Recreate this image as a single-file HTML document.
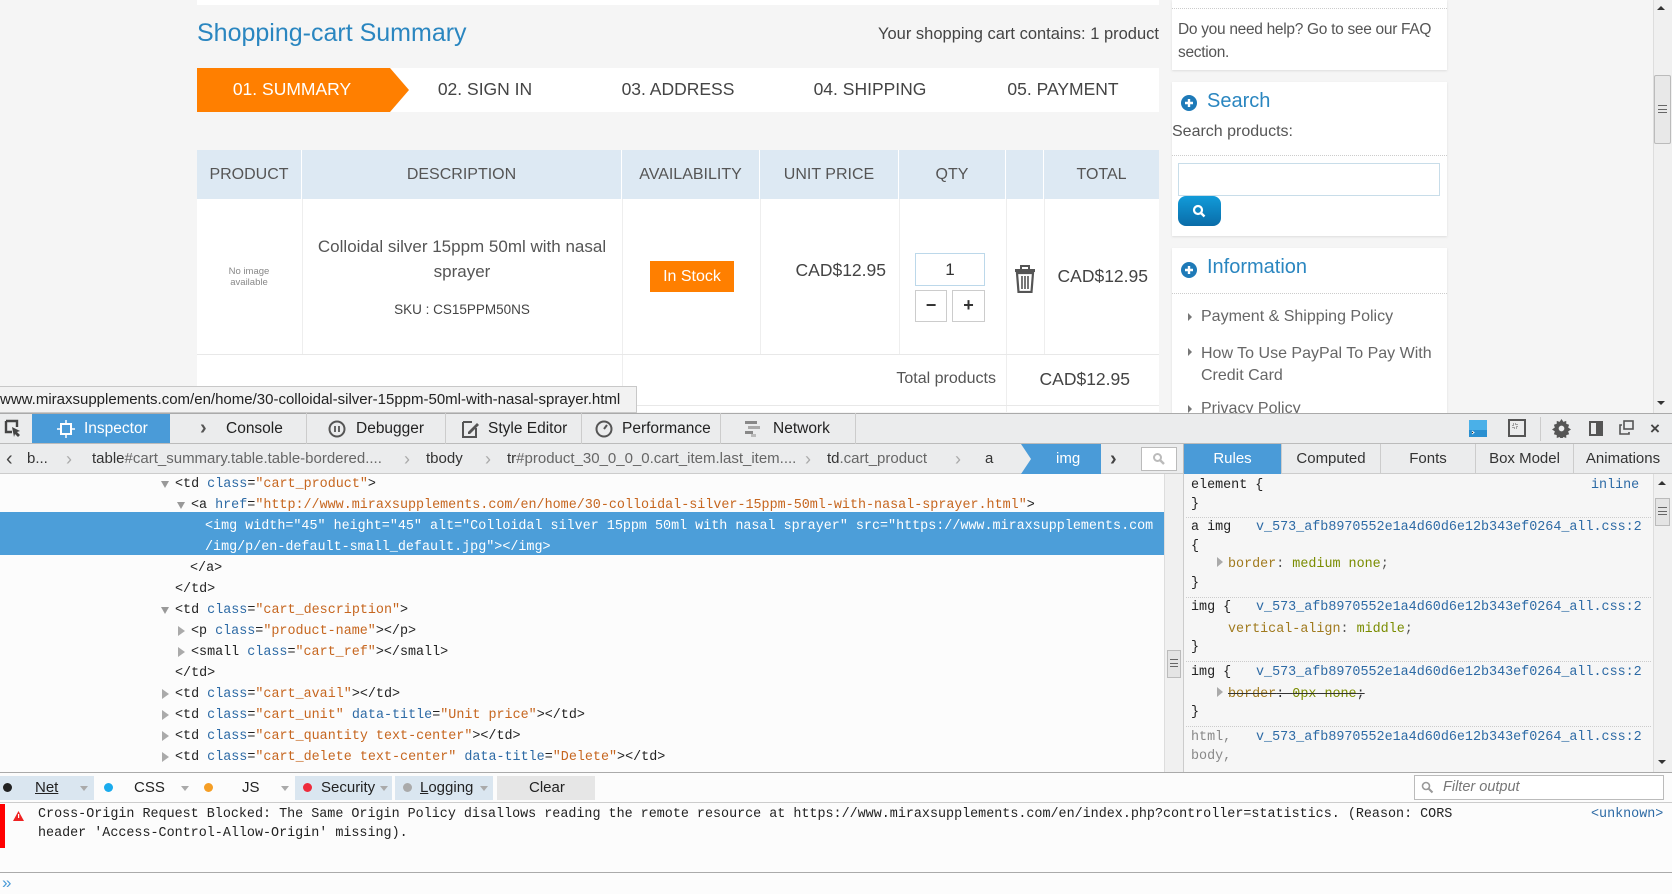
<!DOCTYPE html>
<html><head><meta charset="utf-8">
<style>
*{box-sizing:border-box;margin:0;padding:0}
body{width:1672px;height:894px;overflow:hidden;background:#f5f5f5;font-family:"Liberation Sans",sans-serif;position:relative;color:#555}
.a{position:absolute;white-space:nowrap}
.mono{font-family:"Liberation Mono",monospace;font-size:13.4px}
.t{color:#222}.n{color:#2d6aa5}.v{color:#c6661f}
.tri{display:inline-block;width:0;height:0;border-left:4.5px solid transparent;border-right:4.5px solid transparent;border-top:7px solid #999}
.trr{display:inline-block;width:0;height:0;border-top:5px solid transparent;border-bottom:5px solid transparent;border-left:7px solid #aaa}
.dot{border-top:1px dotted #ccc}
.th{position:absolute;top:150px;height:49px;line-height:49px;text-align:center;font-size:16px;color:#555;border-right:1px solid #fff}
.tab{position:absolute;top:413px;height:31px;line-height:31px;font-size:15.5px;color:#222;border-right:1px solid #ccc}
.bc{position:absolute;top:444px;height:30px;line-height:30px;font-size:15px;color:#333}
.rt{position:absolute;top:444px;height:30px;line-height:30px;font-size:15px;color:#333;text-align:center;border-right:1px solid #ccc}
.fb{position:absolute;top:776px;height:24px;line-height:24px;font-size:15px;color:#222}
</style></head><body>

<div class="a" style="left:197px;top:0;width:962px;height:5px;background:#fff"></div>

<div class="a" style="left:197px;top:19px;font-size:25px;color:#2a86c0">Shopping-cart Summary</div>
<div class="a" style="left:850px;width:309px;text-align:right;top:25px;font-size:16.5px;color:#444">Your shopping cart contains: 1 product</div>

<div class="a" style="left:197px;top:68px;width:962px;height:44px;background:#fff"></div>
<svg class="a" style="left:197px;top:68px" width="214" height="44"><polygon points="0,0 193,0 212,22 193,44 0,44" fill="#ff7f00"/></svg>
<div class="a" style="left:197px;width:190px;text-align:center;top:79px;font-size:17.5px;color:#fff">01. SUMMARY</div>
<div class="a" style="left:425px;width:120px;text-align:center;top:79px;font-size:17.5px;color:#444">02. SIGN IN</div>
<div class="a" style="left:610px;width:136px;text-align:center;top:79px;font-size:17.5px;color:#444">03. ADDRESS</div>
<div class="a" style="left:800px;width:140px;text-align:center;top:79px;font-size:17.5px;color:#444">04. SHIPPING</div>
<div class="a" style="left:993px;width:140px;text-align:center;top:79px;font-size:17.5px;color:#444">05. PAYMENT</div>

<div class="a" style="left:197px;top:150px;width:962px;height:262px;background:#fff"></div>
<div class="a" style="left:197px;top:150px;width:962px;height:49px;background:#dde9f3"></div>
<div class="th" style="left:197px;width:105px">PRODUCT</div>
<div class="th" style="left:302px;width:320px">DESCRIPTION</div>
<div class="th" style="left:622px;width:138px">AVAILABILITY</div>
<div class="th" style="left:760px;width:139px">UNIT PRICE</div>
<div class="th" style="left:899px;width:107px">QTY</div>
<div class="th" style="left:1006px;width:38px"></div>
<div class="th" style="left:1044px;width:115px;border:0">TOTAL</div>
<div class="a" style="left:302px;top:199px;width:1px;height:155px;background:#eee"></div>
<div class="a" style="left:622px;top:199px;width:1px;height:213px;background:#eee"></div>
<div class="a" style="left:760px;top:199px;width:1px;height:155px;background:#eee"></div>
<div class="a" style="left:899px;top:199px;width:1px;height:155px;background:#eee"></div>
<div class="a" style="left:1006px;top:199px;width:1px;height:213px;background:#eee"></div>
<div class="a" style="left:1044px;top:199px;width:1px;height:155px;background:#eee"></div>
<div class="a" style="left:197px;top:354px;width:962px;height:1px;background:#e8e8e8"></div>
<div class="a" style="left:197px;top:405px;width:962px;height:1px;background:#e8e8e8"></div>

<div class="a" style="left:222px;top:266px;width:54px;text-align:center;font-size:9.5px;line-height:11px;color:#888;white-space:normal">No image available</div>
<div class="a" style="left:302px;width:320px;text-align:center;top:234px;font-size:17px;line-height:25px;color:#555;white-space:normal">Colloidal silver 15ppm 50ml with nasal sprayer</div>
<div class="a" style="left:302px;width:320px;text-align:center;top:302px;font-size:13.5px;color:#444">SKU : CS15PPM50NS</div>
<div class="a" style="left:650px;top:261px;width:84px;height:31px;background:#ff7f00;color:#fff;font-size:16px;line-height:31px;text-align:center">In Stock</div>
<div class="a" style="left:760px;width:126px;text-align:right;top:260px;font-size:17.5px;color:#444">CAD$12.95</div>
<div class="a" style="left:915px;top:253px;width:70px;height:33px;border:1px solid #bcd8ea;font-size:17px;line-height:31px;text-align:center;color:#333">1</div>
<div class="a" style="left:915px;top:290px;width:32px;height:32px;border:1px solid #ccc;font-size:18px;line-height:28px;text-align:center;color:#333;font-weight:bold">−</div>
<div class="a" style="left:952px;top:290px;width:33px;height:32px;border:1px solid #ccc;font-size:18px;line-height:28px;text-align:center;color:#333;font-weight:bold">+</div>
<svg class="a" style="left:1013px;top:265px" width="24" height="28" viewBox="0 0 24 28"><rect x="2" y="4" width="20" height="3" fill="#555"/><rect x="8" y="1" width="8" height="4" fill="none" stroke="#555" stroke-width="2"/><path d="M4 8h16l-1.5 19h-13z" fill="none" stroke="#555" stroke-width="2.2"/><path d="M9 11v13M12 11v13M15 11v13" stroke="#555" stroke-width="1.6"/></svg>
<div class="a" style="left:1044px;width:104px;text-align:right;top:266px;font-size:17.5px;color:#444">CAD$12.95</div>
<div class="a" style="left:800px;width:196px;text-align:right;top:370px;font-size:16px;color:#555">Total products</div>
<div class="a" style="left:1006px;width:124px;text-align:right;top:369px;font-size:17.5px;color:#444">CAD$12.95</div>

<div class="a" style="left:1172px;top:0;width:275px;height:70px;background:#fff;box-shadow:0 1px 2px #ddd"></div>
<div class="a dot" style="left:1172px;top:8px;width:275px"></div>
<div class="a" style="left:1178px;top:18px;font-size:15.5px;letter-spacing:-0.3px;line-height:23px;color:#555;white-space:normal;width:268px">Do you need help? Go to see our FAQ section.</div>

<div class="a" style="left:1172px;top:82px;width:275px;height:154px;background:#fff;box-shadow:0 1px 2px #ddd"></div>
<svg class="a" style="left:1181px;top:95px" width="16" height="16"><circle cx="8" cy="8" r="8" fill="#1e7ab8"/><path d="M8 4v8M4 8h8" stroke="#fff" stroke-width="2.4"/></svg>
<div class="a" style="left:1207px;top:90px;font-size:20px;color:#2a86c0">Search</div>
<div class="a" style="left:1172px;top:123px;font-size:16px;color:#555">Search products:</div>
<div class="a dot" style="left:1172px;top:155px;width:275px"></div>
<div class="a" style="left:1178px;top:163px;width:262px;height:33px;border:1px solid #c8dde9;background:#fff"></div>
<div class="a" style="left:1178px;top:196px;width:43px;height:30px;border-radius:8px;background:linear-gradient(#119bd9,#0a6ca8)"></div>
<svg class="a" style="left:1192px;top:204px" width="14" height="14"><circle cx="6" cy="6" r="4" fill="none" stroke="#fff" stroke-width="2.2"/><path d="M9 9l3.5 3.5" stroke="#fff" stroke-width="2.4"/></svg>

<div class="a" style="left:1172px;top:248px;width:275px;height:170px;background:#fff;box-shadow:0 1px 2px #ddd"></div>
<svg class="a" style="left:1181px;top:262px" width="16" height="16"><circle cx="8" cy="8" r="8" fill="#1e7ab8"/><path d="M8 4v8M4 8h8" stroke="#fff" stroke-width="2.4"/></svg>
<div class="a" style="left:1207px;top:256px;font-size:20px;color:#2a86c0">Information</div>
<div class="a dot" style="left:1172px;top:293px;width:275px"></div>
<div class="a" style="left:1188px;top:313px;border-top:4px solid transparent;border-bottom:4px solid transparent;border-left:4px solid #777"></div>
<div class="a" style="left:1201px;top:308px;font-size:16px;color:#666">Payment &amp; Shipping Policy</div>
<div class="a" style="left:1188px;top:348px;border-top:4px solid transparent;border-bottom:4px solid transparent;border-left:4px solid #777"></div>
<div class="a" style="left:1201px;top:343px;font-size:16px;line-height:22px;color:#666">How To Use PayPal To Pay With<br>Credit Card</div>
<div class="a" style="left:1188px;top:405px;border-top:4px solid transparent;border-bottom:4px solid transparent;border-left:4px solid #777"></div>
<div class="a" style="left:1201px;top:400px;font-size:16px;color:#666">Privacy Policy</div>

<div class="a" style="left:1653px;top:0;width:19px;height:413px;background:#f0f0f0;border-left:1px solid #ddd"></div>
<div class="a" style="left:1657px;top:6px;border-left:4px solid transparent;border-right:4px solid transparent;border-bottom:4px solid #333"></div>
<div class="a" style="left:1654px;top:75px;width:17px;height:69px;background:#e8e8e8;border:1px solid #bbb;border-radius:2px"></div>
<div class="a" style="left:1658px;top:105px;width:9px;height:8px;border-top:1px solid #666;border-bottom:1px solid #666"></div>
<div class="a" style="left:1658px;top:109px;width:9px;height:1px;background:#666"></div>
<div class="a" style="left:1657px;top:401px;border-left:4px solid transparent;border-right:4px solid transparent;border-top:4px solid #333"></div>

<div class="a" style="left:0;top:386px;width:637px;height:27px;background:#f2f2f2;border:1px solid #c8c8c8;border-left:0;font-size:15px;line-height:25px;color:#222;overflow:hidden">www.miraxsupplements.com/en/home/30-colloidal-silver-15ppm-50ml-with-nasal-sprayer.html</div>

<div class="a" style="left:0;top:413px;width:1672px;height:31px;background:#ebeced;border-top:1px solid #aaa;border-bottom:1px solid #bbb"></div>
<svg class="a" style="left:4px;top:419px" width="18" height="18"><path d="M2 2h11v6M2 2v11h6" fill="none" stroke="#444" stroke-width="2.4"/><path d="M8 8l8 4-3 1 3 3-2 2-3-3-1 3z" fill="#444"/></svg>
<div class="a" style="left:32px;top:414px;width:138px;height:29px;background:#4a9bd8"></div>
<svg class="a" style="left:57px;top:420px" width="18" height="18"><rect x="4" y="4" width="10" height="10" fill="none" stroke="#fff" stroke-width="2"/><path d="M9 0v4M9 14v4M0 9h4M14 9h4" stroke="#fff" stroke-width="1.5"/></svg>
<div class="tab" style="left:84px;color:#fff;border:0">Inspector</div>
<div class="tab" style="left:170px;width:137px"><span style="position:absolute;left:30px;font-size:20px;color:#555;font-weight:bold">›</span><span style="position:absolute;left:56px">Console</span></div>
<div class="tab" style="left:307px;width:139px"><svg style="position:absolute;left:21px;top:7px" width="18" height="18"><circle cx="9" cy="9" r="7.5" fill="none" stroke="#555" stroke-width="2"/><path d="M7 6v6M11 6v6" stroke="#555" stroke-width="1.8"/></svg><span style="position:absolute;left:49px">Debugger</span></div>
<div class="tab" style="left:446px;width:136px"><svg style="position:absolute;left:14px;top:6px" width="20" height="20"><path d="M3 3h9M3 3v15h13V9" fill="none" stroke="#555" stroke-width="2"/><path d="M8 13l9-9 2 2-9 9H8z" fill="#555"/></svg><span style="position:absolute;left:42px">Style Editor</span></div>
<div class="tab" style="left:582px;width:139px"><svg style="position:absolute;left:13px;top:7px" width="18" height="18"><circle cx="9" cy="9" r="7.5" fill="none" stroke="#555" stroke-width="2"/><path d="M9 9l3-4" stroke="#555" stroke-width="2"/></svg><span style="position:absolute;left:40px">Performance</span></div>
<div class="tab" style="left:721px;width:135px"><svg style="position:absolute;left:24px;top:8px" width="18" height="16"><rect x="0" y="0" width="12" height="3" fill="#888"/><rect x="3" y="5" width="12" height="3" fill="#aaa"/><rect x="0" y="10" width="8" height="3" fill="#888"/><rect x="6" y="13" width="5" height="3" fill="#bbb"/></svg><span style="position:absolute;left:52px">Network</span></div>
<svg class="a" style="left:1469px;top:420px" width="18" height="17"><rect width="18" height="17" fill="#4ab0e8"/><rect y="10" width="18" height="7" fill="#2a8fd0"/><path d="M3 11l2 1.5L3 14" stroke="#fff" stroke-width="1"/></svg>
<svg class="a" style="left:1508px;top:419px" width="18" height="18"><rect x="1" y="1" width="16" height="16" fill="none" stroke="#555" stroke-width="2"/><rect x="5" y="5" width="4" height="4" fill="none" stroke="#555" stroke-width="1" stroke-dasharray="1 1"/></svg>
<div class="a" style="left:1540px;top:417px;width:1px;height:24px;background:#ccc"></div>
<svg class="a" style="left:1552px;top:419px" width="19" height="19" viewBox="0 0 20 20"><path d="M10 0l2 3 3-1 0 3 3 1-1 3 3 2-3 2 1 3-3 1 0 3-3-1-2 3-2-3-3 1 0-3-3-1 1-3-3-2 3-2-1-3 3-1 0-3 3 1z" fill="#555"/><circle cx="10" cy="10" r="3" fill="#ebeced"/></svg>
<svg class="a" style="left:1589px;top:421px" width="14" height="15"><rect x="1" y="1" width="12" height="13" fill="none" stroke="#555" stroke-width="2"/><rect x="7" y="1" width="6" height="13" fill="#555"/></svg>
<svg class="a" style="left:1619px;top:420px" width="15" height="15"><rect x="5" y="1" width="9" height="8" fill="none" stroke="#555" stroke-width="1.6"/><path d="M3 5H1v9h9v-2" fill="none" stroke="#555" stroke-width="1.6"/></svg>
<div class="a" style="left:1650px;top:419px;font-size:17px;font-weight:bold;color:#444">×</div>

<div class="a" style="left:0;top:444px;width:1184px;height:30px;background:#ebeced;border-bottom:1px solid #ccc"></div>
<div class="bc" style="left:6px;font-size:20px;color:#444">‹</div>
<div class="bc" style="left:27px">b...</div>
<div class="bc" style="left:66px;color:#aaa;font-size:18px">›</div>
<div class="bc" style="left:92px">table<span style="color:#666">#cart_summary.table.table-bordered....</span></div>
<div class="bc" style="left:404px;color:#aaa;font-size:18px">›</div>
<div class="bc" style="left:426px">tbody</div>
<div class="bc" style="left:485px;color:#aaa;font-size:18px">›</div>
<div class="bc" style="left:507px">tr<span style="color:#666">#product_30_0_0_0.cart_item.last_item....</span></div>
<div class="bc" style="left:805px;color:#aaa;font-size:18px">›</div>
<div class="bc" style="left:827px">td<span style="color:#666">.cart_product</span></div>
<div class="bc" style="left:955px;color:#aaa;font-size:18px">›</div>
<div class="bc" style="left:985px">a</div>
<svg class="a" style="left:1021px;top:444px" width="80" height="30"><polygon points="0,0 80,0 80,30 0,30 10,15" fill="#4a9bd8"/></svg>
<div class="bc" style="left:1056px;color:#fff">img</div>
<div class="bc" style="left:1110px;font-size:20px;font-weight:bold;color:#444">›</div>
<div class="a" style="left:1141px;top:447px;width:36px;height:24px;background:#fff;border:1px solid #bbb"></div>
<svg class="a" style="left:1152px;top:452px" width="14" height="14"><circle cx="5.5" cy="5.5" r="3.5" fill="none" stroke="#bbb" stroke-width="2"/><path d="M8 8l4 4" stroke="#bbb" stroke-width="2.4"/></svg>

<div class="a" style="left:1183px;top:444px;width:489px;height:30px;background:#ebeced;border-bottom:1px solid #ccc;border-left:1px solid #bbb"></div>
<div class="rt" style="left:1184px;width:98px;background:#4a9bd8;color:#fff">Rules</div>
<div class="rt" style="left:1282px;width:99px">Computed</div>
<div class="rt" style="left:1381px;width:95px">Fonts</div>
<div class="rt" style="left:1476px;width:98px">Box Model</div>
<div class="rt" style="left:1574px;width:98px;border:0">Animations</div>

<div class="a" style="left:0;top:474px;width:1164px;height:299px;background:#fcfcfc"></div>
<div class="a" style="left:0;top:512px;width:1164px;height:43px;background:#4c9ed9"></div>
<div class="a mono" style="left:0;top:474px;width:1164px;line-height:21px">
<div style="position:relative;height:21px"><span class="tri a" style="left:161px;top:7px"></span><span class="a" style="left:175px"><span class="t">&lt;td </span><span class="n">class</span><span class="t">=</span><span class="v">"cart_product"</span><span class="t">&gt;</span></span></div>
<div style="position:relative;height:21px"><span class="tri a" style="left:177px;top:7px"></span><span class="a" style="left:191px"><span class="t">&lt;a </span><span class="n">href</span><span class="t">=</span><span class="v">"http://www.miraxsupplements.com/en/home/30-colloidal-silver-15ppm-50ml-with-nasal-sprayer.html"</span><span class="t">&gt;</span></span></div>
<div style="position:relative;height:21px;color:#fff"><span class="a" style="left:205px">&lt;img width="45" height="45" alt="Colloidal silver 15ppm 50ml with nasal sprayer" src="https://www.miraxsupplements.com</span></div>
<div style="position:relative;height:21px;color:#fff"><span class="a" style="left:205px">/img/p/en-default-small_default.jpg"&gt;&lt;/img&gt;</span></div>
<div style="position:relative;height:21px"><span class="a t" style="left:190px">&lt;/a&gt;</span></div>
<div style="position:relative;height:21px"><span class="a t" style="left:175px">&lt;/td&gt;</span></div>
<div style="position:relative;height:21px"><span class="tri a" style="left:161px;top:7px"></span><span class="a" style="left:175px"><span class="t">&lt;td </span><span class="n">class</span><span class="t">=</span><span class="v">"cart_description"</span><span class="t">&gt;</span></span></div>
<div style="position:relative;height:21px"><span class="trr a" style="left:178px;top:5px"></span><span class="a" style="left:191px"><span class="t">&lt;p </span><span class="n">class</span><span class="t">=</span><span class="v">"product-name"</span><span class="t">&gt;&lt;/p&gt;</span></span></div>
<div style="position:relative;height:21px"><span class="trr a" style="left:178px;top:5px"></span><span class="a" style="left:191px"><span class="t">&lt;small </span><span class="n">class</span><span class="t">=</span><span class="v">"cart_ref"</span><span class="t">&gt;&lt;/small&gt;</span></span></div>
<div style="position:relative;height:21px"><span class="a t" style="left:175px">&lt;/td&gt;</span></div>
<div style="position:relative;height:21px"><span class="trr a" style="left:162px;top:5px"></span><span class="a" style="left:175px"><span class="t">&lt;td </span><span class="n">class</span><span class="t">=</span><span class="v">"cart_avail"</span><span class="t">&gt;&lt;/td&gt;</span></span></div>
<div style="position:relative;height:21px"><span class="trr a" style="left:162px;top:5px"></span><span class="a" style="left:175px"><span class="t">&lt;td </span><span class="n">class</span><span class="t">=</span><span class="v">"cart_unit"</span><span class="t"> </span><span class="n">data-title</span><span class="t">=</span><span class="v">"Unit price"</span><span class="t">&gt;&lt;/td&gt;</span></span></div>
<div style="position:relative;height:21px"><span class="trr a" style="left:162px;top:5px"></span><span class="a" style="left:175px"><span class="t">&lt;td </span><span class="n">class</span><span class="t">=</span><span class="v">"cart_quantity text-center"</span><span class="t">&gt;&lt;/td&gt;</span></span></div>
<div style="position:relative;height:21px"><span class="trr a" style="left:162px;top:5px"></span><span class="a" style="left:175px"><span class="t">&lt;td </span><span class="n">class</span><span class="t">=</span><span class="v">"cart_delete text-center"</span><span class="t"> </span><span class="n">data-title</span><span class="t">=</span><span class="v">"Delete"</span><span class="t">&gt;&lt;/td&gt;</span></span></div>
</div>
<div class="a" style="left:1164px;top:474px;width:20px;height:299px;background:#f0f0f0;border-left:1px solid #ddd;border-right:1px solid #ccc"></div>
<div class="a" style="left:1167px;top:650px;width:14px;height:28px;background:#e4e4e4;border:1px solid #bbb"></div>
<div class="a" style="left:1170px;top:659px;width:8px;height:8px;border-top:1px solid #666;border-bottom:1px solid #666"></div>
<div class="a" style="left:1170px;top:663px;width:8px;height:1px;background:#666"></div>

<div class="a" style="left:1184px;top:474px;width:469px;height:299px;background:#f6f6f6"></div>
<div class="a mono" style="left:1191px;top:476px;line-height:19px;color:#222">element {<br>}</div>
<div class="a mono" style="left:1591px;top:476px;color:#2d6aa5;line-height:19px">inline</div>
<div class="a dot" style="left:1186px;top:517px;width:465px"></div>
<div class="a mono" style="left:1191px;top:518px;line-height:19px;color:#222">a img<br>{</div>
<div class="a mono" style="left:1256px;top:518px;color:#2d6aa5;line-height:19px">v_573_afb8970552e1a4d60d6e12b343ef0264_all.css:2</div>
<div class="a" style="left:1217px;top:557px;border-top:5px solid transparent;border-bottom:5px solid transparent;border-left:6px solid #aaa"></div>
<div class="a mono" style="left:1228px;top:555px;line-height:19px"><span style="color:#a07a1e">border</span>: <span style="color:#7a8c00">medium none</span>;</div>
<div class="a mono" style="left:1191px;top:574px;line-height:19px;color:#222">}</div>
<div class="a dot" style="left:1186px;top:597px;width:465px"></div>
<div class="a mono" style="left:1191px;top:598px;line-height:19px;color:#222">img {</div>
<div class="a mono" style="left:1256px;top:598px;color:#2d6aa5;line-height:19px">v_573_afb8970552e1a4d60d6e12b343ef0264_all.css:2</div>
<div class="a mono" style="left:1228px;top:620px;line-height:19px"><span style="color:#a07a1e">vertical-align</span>: <span style="color:#7a8c00">middle</span>;</div>
<div class="a mono" style="left:1191px;top:638px;line-height:19px;color:#222">}</div>
<div class="a dot" style="left:1186px;top:661px;width:465px"></div>
<div class="a mono" style="left:1191px;top:663px;line-height:19px;color:#222">img {</div>
<div class="a mono" style="left:1256px;top:663px;color:#2d6aa5;line-height:19px">v_573_afb8970552e1a4d60d6e12b343ef0264_all.css:2</div>
<div class="a" style="left:1217px;top:687px;border-top:5px solid transparent;border-bottom:5px solid transparent;border-left:6px solid #aaa"></div>
<div class="a mono" style="left:1228px;top:685px;line-height:19px;text-decoration:line-through;color:#333"><span style="color:#a07a1e">border</span>: <span style="color:#7a8c00">0px none</span>;</div>
<div class="a mono" style="left:1191px;top:703px;line-height:19px;color:#222">}</div>
<div class="a dot" style="left:1186px;top:726px;width:465px"></div>
<div class="a mono" style="left:1191px;top:728px;line-height:19px;color:#888">html,<br>body,</div>
<div class="a mono" style="left:1256px;top:728px;color:#2d6aa5;line-height:19px">v_573_afb8970552e1a4d60d6e12b343ef0264_all.css:2</div>
<div class="a" style="left:1653px;top:474px;width:19px;height:299px;background:#f0f0f0;border-left:1px solid #ddd"></div>
<div class="a" style="left:1658px;top:481px;border-left:4px solid transparent;border-right:4px solid transparent;border-bottom:4px solid #333"></div>
<div class="a" style="left:1655px;top:498px;width:15px;height:28px;background:#e4e4e4;border:1px solid #bbb"></div>
<div class="a" style="left:1658px;top:507px;width:9px;height:8px;border-top:1px solid #666;border-bottom:1px solid #666"></div>
<div class="a" style="left:1658px;top:511px;width:9px;height:1px;background:#666"></div>
<div class="a" style="left:1658px;top:760px;border-left:4px solid transparent;border-right:4px solid transparent;border-top:4px solid #333"></div>

<div class="a" style="left:0;top:772px;width:1672px;height:31px;background:#fcfcfc;border-top:1px solid #aaa;border-bottom:1px solid #ccc"></div>
<div class="a" style="left:0;top:776px;width:94px;height:24px;background:#dae6f0"></div>
<div class="a" style="left:295px;top:776px;width:97px;height:24px;background:#dae6f0"></div>
<div class="a" style="left:395px;top:776px;width:98px;height:24px;background:#dae6f0"></div>
<div class="a" style="left:497px;top:776px;width:98px;height:24px;background:#e6e6e6"></div>
<div class="a" style="left:3px;top:783px;width:9px;height:9px;border-radius:50%;background:#222"></div>
<div class="fb" style="left:35px;text-decoration:underline">Net</div><div class="a" style="left:80px;top:786px;border-left:4px solid transparent;border-right:4px solid transparent;border-top:5px solid #aaa"></div>
<div class="a" style="left:104px;top:783px;width:9px;height:9px;border-radius:50%;background:#1aabed"></div>
<div class="fb" style="left:134px">CSS</div><div class="a" style="left:181px;top:786px;border-left:4px solid transparent;border-right:4px solid transparent;border-top:5px solid #aaa"></div>
<div class="a" style="left:204px;top:783px;width:9px;height:9px;border-radius:50%;background:#f59e25"></div>
<div class="fb" style="left:242px">JS</div><div class="a" style="left:281px;top:786px;border-left:4px solid transparent;border-right:4px solid transparent;border-top:5px solid #aaa"></div>
<div class="a" style="left:303px;top:783px;width:9px;height:9px;border-radius:50%;background:#ee2b3b"></div>
<div class="fb" style="left:321px">Security</div><div class="a" style="left:380px;top:786px;border-left:4px solid transparent;border-right:4px solid transparent;border-top:5px solid #aaa"></div>
<div class="a" style="left:403px;top:783px;width:9px;height:9px;border-radius:50%;background:#aaa"></div>
<div class="fb" style="left:420px"><u>L</u>ogging</div><div class="a" style="left:480px;top:786px;border-left:4px solid transparent;border-right:4px solid transparent;border-top:5px solid #aaa"></div>
<div class="fb" style="left:529px">Clear</div>
<div class="a" style="left:1414px;top:775px;width:250px;height:25px;background:#fff;border:1px solid #bbb"></div>
<svg class="a" style="left:1421px;top:781px" width="13" height="13"><circle cx="5" cy="5" r="3.5" fill="none" stroke="#999" stroke-width="1.6"/><path d="M7.5 7.5l4 4" stroke="#999" stroke-width="2"/></svg>
<div class="a" style="left:1443px;top:779px;font-size:14.5px;font-style:italic;color:#777">Filter output</div>

<div class="a" style="left:0;top:803px;width:1672px;height:69px;background:#fcfcfc"></div>
<div class="a" style="left:0;top:804px;width:5px;height:44px;background:#f00"></div>
<svg class="a" style="left:13px;top:811px" width="11" height="10"><polygon points="5.5,0 11,10 0,10" fill="#e22"/><rect x="5" y="3" width="1.2" height="4" fill="#fff"/></svg>
<div class="a mono" style="left:38px;top:805px;line-height:19px;color:#222">Cross-Origin Request Blocked: The Same Origin Policy disallows reading the remote resource at https://www.miraxsupplements.com/en/index.php?controller=statistics. (Reason: CORS<br>header 'Access-Control-Allow-Origin' missing).</div>
<div class="a mono" style="left:1591px;top:805px;line-height:19px;color:#2d6aa5">&lt;unknown&gt;</div>
<div class="a" style="left:0;top:872px;width:1672px;height:1px;background:#aaa"></div>
<div class="a" style="left:0;top:873px;width:1672px;height:21px;background:#fcfcfc"></div>
<div class="a" style="left:2px;top:873px;font-size:17px;color:#4a9bd8">»</div>
</body></html>
